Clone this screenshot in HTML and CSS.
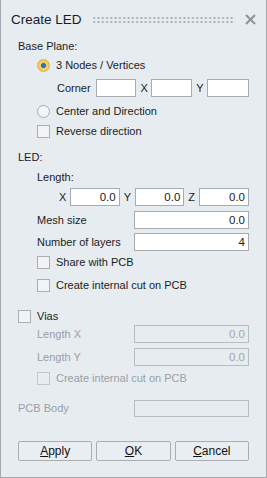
FILE: index.html
```html
<!DOCTYPE html>
<html lang="en">
<head>
    <meta charset="UTF-8">
    <title>Create LED</title>
    <link rel="stylesheet" href="styles.css">
</head>
<body>
    <div class="dialog">
        <div class="titlebar">
            <span class="title">Create LED</span>
            <span class="grip"></span>
            <svg class="close" width="11" height="11" viewBox="0 0 11 11">
                <path d="M1 1 L10 10 M10 1 L1 10" stroke="#8e9398" stroke-width="2" fill="none"/>
            </svg>
        </div>

        <div class="row r-base">Base Plane:</div>
        <div class="row r-radio1 indent"><span class="radio on"></span><span>3 Nodes / Vertices</span></div>
        <div class="row r-corner corner">
            <span class="lbl-corner">Corner</span>
            <span class="field w42"></span>
            <span class="axis">X</span>
            <span class="field w42"></span>
            <span class="axis">Y</span>
            <span class="field w43"></span>
        </div>
        <div class="row r-radio2 indent"><span class="radio"></span><span>Center and Direction</span></div>
        <div class="row r-reverse indent"><span class="check"></span><span>Reverse direction</span></div>

        <div class="row r-led">LED:</div>
        <div class="row r-length indent">Length:</div>
        <div class="row r-xyz xyz">
            <span class="axis">X</span><span class="field num">0.0</span>
            <span class="axis">Y</span><span class="field num">0.0</span>
            <span class="axis">Z</span><span class="field num">0.0</span>
        </div>
        <div class="row r-mesh indent labeled">
            <span class="label">Mesh size</span><span class="field wide num">0.0</span>
        </div>
        <div class="row r-layers indent labeled">
            <span class="label">Number of layers</span><span class="field wide num">4</span>
        </div>
        <div class="row r-share indent"><span class="check"></span><span>Share with PCB</span></div>
        <div class="row r-cut indent"><span class="check"></span><span>Create internal cut on PCB</span></div>

        <div class="row r-vias vias"><span class="check"></span><span>Vias</span></div>
        <div class="row r-lenx indent labeled disabled">
            <span class="label">Length X</span><span class="field wide num">0.0</span>
        </div>
        <div class="row r-leny indent labeled disabled">
            <span class="label">Length Y</span><span class="field wide num">0.0</span>
        </div>
        <div class="row r-cut2 indent disabled"><span class="check"></span><span>Create internal cut on PCB</span></div>

        <div class="row r-pcb labeled disabled">
            <span class="label">PCB Body</span><span class="field wide pcb"></span>
        </div>

        <div class="buttons">
            <button><u>A</u>pply</button>
            <button><u>O</u>K</button>
            <button><u>C</u>ancel</button>
        </div>
    </div>
</body>
</html>
```

FILE: styles.css
```css
body {
    margin: 0;
    padding: 0;
    background-color: #e6ecf0;
    font-family: "Liberation Sans", Arial, sans-serif;
    font-size: 11px;
    color: #1c1c1c;
}

.dialog {
    width: 231px; /* 267 minus padding and borders */
    height: 477px;
    padding: 0 17px;
    border: 1px solid #a3a9ae;
    border-top: none;
    background-color: #e6ecf0;
}

.titlebar {
    height: 37px;
    display: flex;
    align-items: center;
    margin: 0 -7px;
}

.title {
    font-size: 13.5px;
    color: #1a1a2e;
    padding-top: 1px;
}

.grip {
    flex: 1;
    height: 7px;
    margin: 2px 10px 0 10px;
    background-image: radial-gradient(circle, #a4aab0 0.9px, transparent 1.1px);
    background-size: 4.3px 4px;
}

.close {
    margin-top: 1px;
}

.row {
    height: 18px;
    display: flex;
    align-items: center;
    white-space: nowrap;
}

.indent {
    padding-left: 19px;
}

.indent > .radio,
.indent > .check,
.vias > .check {
    margin-right: 6px;
}

/* vertical rhythm */
.r-radio1 { margin-top: 1px; }
.r-corner { margin-top: 5px; }
.r-radio2 { margin-top: 5px; }
.r-reverse { margin-top: 2px; }
.r-led { margin-top: 8px; }
.r-length { margin-top: 2px; }
.r-xyz { margin-top: 2px; }
.r-mesh { margin-top: 5px; }
.r-layers { margin-top: 4px; }
.r-share { margin-top: 2px; }
.r-cut { margin-top: 5px; }
.r-vias { margin-top: 13px; }
.r-leny { margin-top: 5px; }
.r-cut2 { margin-top: 3px; }
.r-pcb { margin-top: 12px; }

.radio {
    width: 11px;
    height: 11px;
    border: 1px solid #a9aeb3;
    border-radius: 50%;
    background-color: #f3f5f7;
    flex: none;
}

.radio.on {
    border-color: #d9b24a;
    background: radial-gradient(circle, #2f6fd0 0 2.3px, #f4cf5a 2.8px 4.2px, #e8c870 4.8px);
}

.check {
    width: 11px;
    height: 11px;
    border: 1px solid #a9aeb3;
    background-color: #f1f3f5;
    flex: none;
}

.field {
    height: 16px;
    border: 1px solid #a6acb2;
    background-color: #ffffff;
    display: flex;
    align-items: center;
    justify-content: flex-end;
    padding-right: 3px;
    font-size: 11.5px;
}

.corner {
    padding-left: 39px;
}

.lbl-corner {
    margin-right: 5px;
}

.corner .field {
    padding-right: 0;
}

.w42 { width: 40px; }
.w43 { width: 41px; }

.corner .axis {
    width: 7px;
    margin: 0 4px;
}

.xyz {
    padding-left: 41px;
}

.xyz .axis {
    width: 7px;
    margin-right: 4px;
}

.xyz .field {
    flex: 1;
    margin-right: 4px;
}

.xyz .field:last-child {
    margin-right: 0;
}

.labeled .label {
    flex: 1;
}

.field.wide {
    width: 110px;
}

.field.pcb {
    height: 15px;
}

.disabled {
    color: #9aa0a6;
}

.disabled .field {
    background-color: #e6ecf0;
    border-color: #b8bdc2;
    color: #a2a7ac;
}

.disabled .check {
    border-color: #c3c7cb;
    background-color: #e9edf0;
}

.buttons {
    display: flex;
    gap: 4px;
    margin-top: 24px;
}

.buttons button {
    flex: 1;
    height: 20px;
    padding: 0;
    border: 1px solid #a9aeb3;
    border-radius: 2px;
    background-color: #e9eef2;
    font-family: "Liberation Sans", Arial, sans-serif;
    font-size: 12px;
    color: #111111;
}
```
